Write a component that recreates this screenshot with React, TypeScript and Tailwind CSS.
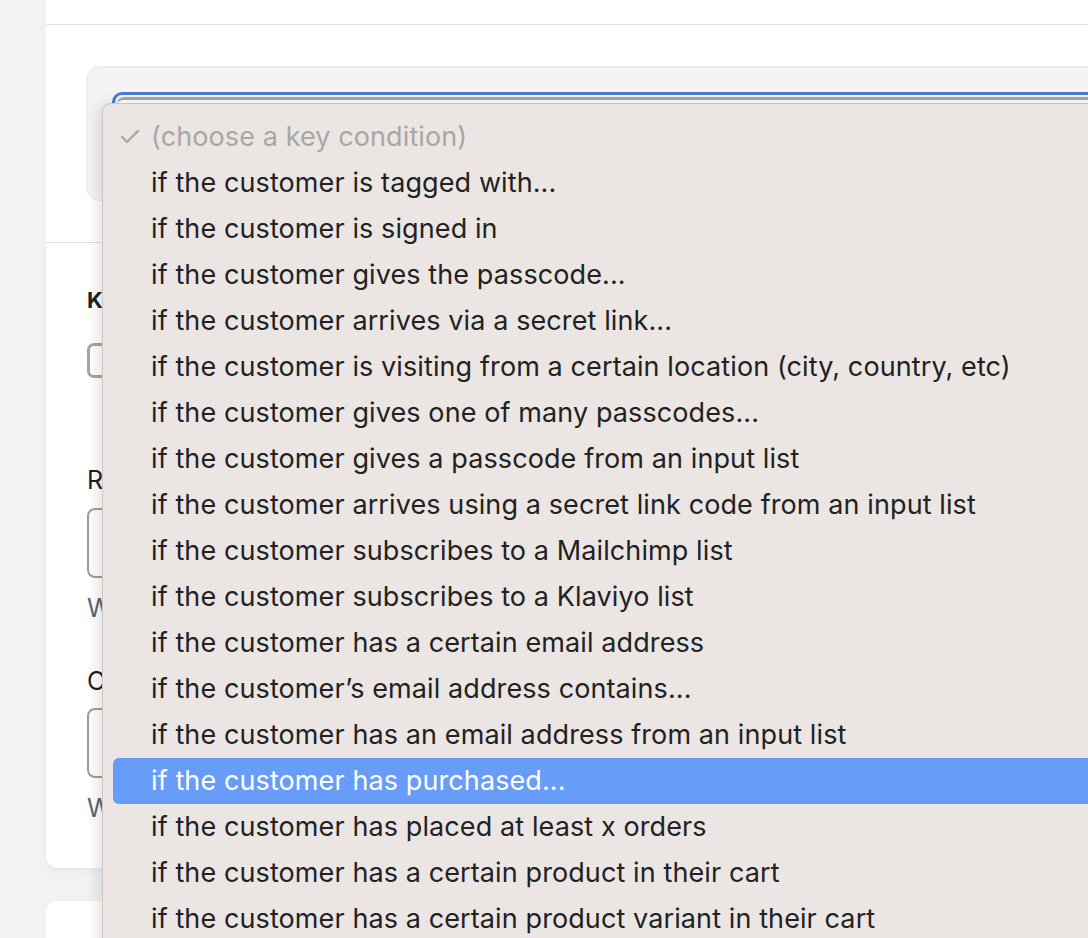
import { Check } from "lucide-react";

const options = [
  "if the customer is tagged with...",
  "if the customer is signed in",
  "if the customer gives the passcode...",
  "if the customer arrives via a secret link...",
  "if the customer is visiting from a certain location (city, country, etc)",
  "if the customer gives one of many passcodes...",
  "if the customer gives a passcode from an input list",
  "if the customer arrives using a secret link code from an input list",
  "if the customer subscribes to a Mailchimp list",
  "if the customer subscribes to a Klaviyo list",
  "if the customer has a certain email address",
  "if the customer\u2019s email address contains...",
  "if the customer has an email address from an input list",
  "if the customer has purchased...",
  "if the customer has placed at least x orders",
  "if the customer has a certain product in their cart",
  "if the customer has a certain product variant in their cart",
  "if the customer has a certain subscription",
];

const selected = "if the customer has purchased...";

export default function App() {
  return (
    <div className="relative flex h-[938px] w-[1088px] overflow-hidden bg-[#f1f2f4] font-['Inter',sans-serif] text-[#1f1f1f]">
      <div className="ml-[46px] flex w-[1200px] shrink-0 flex-col">
        {/* page header */}
        <div className="h-[25px] shrink-0 border-b border-[#e3e3e3] bg-white" />

        {/* select block */}
        <div className="h-[218px] shrink-0 border-b border-[#e3e3e3] bg-white pl-[40px] pt-[41px]">
          <div className="h-[135px] rounded-[14px] border border-[#ebebeb] bg-[#f4f4f5] pl-[25px] pt-[25px] shadow-[inset_0_1px_2px_rgba(0,0,0,0.04)]">
            <div className="h-[40px] rounded-t-[10px] border-[3px] border-b-0 border-[#4a7bd0] p-[2px]">
              <div className="h-full rounded-t-[7px] border-t-[3px] border-[#a4a8ae] bg-white" />
            </div>
          </div>
        </div>

        {/* form fields */}
        <div className="h-[625px] shrink-0 rounded-b-[12px] bg-white pl-[41px] pt-[43px] shadow-[0_2px_6px_rgba(0,0,0,0.06)]">
          <div className="text-[22px] font-bold leading-[28px]">Key condition</div>
          <div className="mt-[29px] h-[35px] w-[35px] rounded-[7px] border-[3px] border-[#a2a6ab]" />

          <div className="mt-[87px] text-[25px] leading-[30px]">Redirect URL</div>
          <div className="mt-[13px] h-[70px] rounded-[8px] border-2 border-[#9a9ea5]" />
          <div className="mt-[15px] text-[25px] leading-[30px] text-[#5c6470]">When the condition is met</div>

          <div className="mt-[43px] text-[25px] leading-[30px]">Closed message</div>
          <div className="mt-[12px] h-[70px] rounded-[8px] border-2 border-[#9a9ea5]" />
          <div className="mt-[15px] text-[25px] leading-[30px] text-[#5c6470]">When the condition is not met</div>
        </div>

        <div className="mt-[33px] h-[60px] shrink-0 rounded-t-[12px] bg-white" />
      </div>

      {/* open native select menu */}
      <div className="absolute left-[102px] top-[103px] w-[1100px] rounded-tl-[9px] border-l border-t border-[#c9c6c4] bg-[#ebe6e4] px-[10px] pt-[10px] text-[27px] tracking-[0.1px] shadow-[-4px_0_14px_rgba(0,0,0,0.12)]">
        <div className="flex h-[46px] items-center text-[#a9a6a4]">
          <Check className="ml-[5px] mr-[9px] h-[24px] w-[24px]" strokeWidth={2.4} />
          <span>(choose a key condition)</span>
        </div>
        {options.map((o) => (
          <div
            key={o}
            className={
              o === selected
                ? "flex h-[46px] items-center whitespace-nowrap rounded-[6px] bg-[#679df8] pl-[38px] text-white"
                : "flex h-[46px] items-center whitespace-nowrap pl-[38px] text-[#222222]"
            }
          >
            {o}
          </div>
        ))}
      </div>
    </div>
  );
}
